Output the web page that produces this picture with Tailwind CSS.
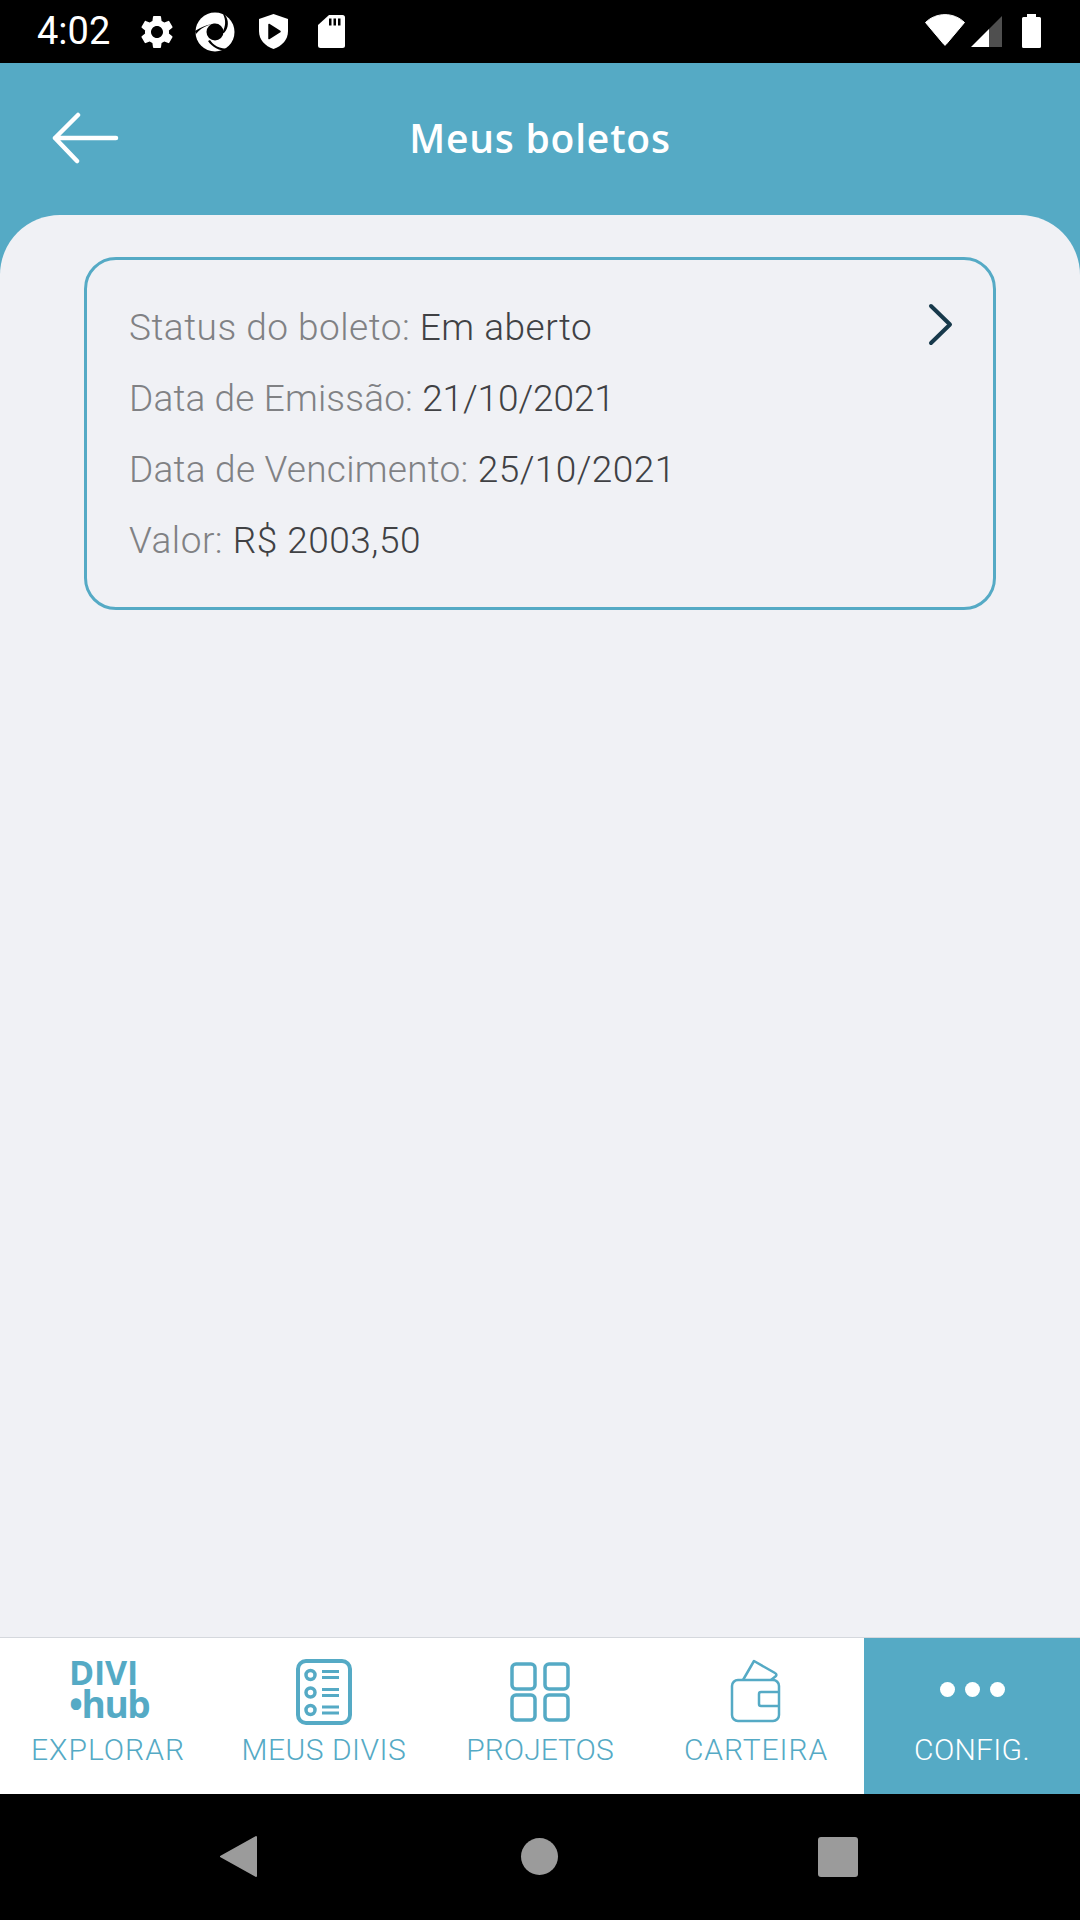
<!DOCTYPE html>
<html><head><meta charset="utf-8"><script src="https://cdn.jsdelivr.net/npm/@tailwindcss/browser@4"></script></head>
<body class="m-0">
<div class="w-[1080px] h-[1920px] flex flex-col bg-[#55aac5] overflow-hidden font-['Roboto',sans-serif]">
  <!-- status bar -->
  <div class="h-[63px] bg-black flex items-center text-white shrink-0 relative">
    <span class="absolute left-[37px] top-[9px] text-[38px] leading-[44px] font-normal font-['Roboto',sans-serif]">4:02</span>
    <svg class="absolute left-[137px] top-[12px]" width="40" height="40" viewBox="0 0 24 24" fill="#fff"><path d="M19.14 12.94c.04-.3.06-.61.06-.94 0-.32-.02-.64-.07-.94l2.03-1.58a.49.49 0 0 0 .12-.61l-1.92-3.32a.488.488 0 0 0-.59-.22l-2.39.96c-.5-.38-1.03-.7-1.62-.94l-.36-2.54a.484.484 0 0 0-.48-.41h-3.84c-.24 0-.43.17-.47.41l-.36 2.54c-.59.24-1.13.57-1.62.94l-2.39-.96c-.22-.08-.47 0-.59.22L2.74 8.87c-.12.21-.08.47.12.61l2.03 1.58c-.05.3-.09.63-.09.94s.02.64.07.94l-2.03 1.58a.49.49 0 0 0-.12.61l1.92 3.32c.12.22.37.29.59.22l2.39-.96c.5.38 1.03.7 1.62.94l.36 2.54c.05.24.24.41.48.41h3.84c.24 0 .44-.17.47-.41l.36-2.54c.59-.24 1.13-.56 1.62-.94l2.39.96c.22.08.47 0 .59-.22l1.92-3.32c.12-.22.07-.47-.12-.61l-2.01-1.58zM12 15.6c-1.98 0-3.6-1.62-3.6-3.6s1.62-3.6 3.6-3.6 3.6 1.62 3.6 3.6-1.62 3.6-3.6 3.6z"/></svg>
    <svg class="absolute left-[195px] top-[12px]" width="40" height="40" viewBox="0 0 40 40"><circle cx="20" cy="20" r="19.5" fill="#fff"/><circle cx="20" cy="20" r="8.5" fill="#000"/><path d="M0 19C8 14 15 12 21 11.5L14 13C8 15 4 18 1 22Z" fill="#000"/><path d="M28 2C31 8 31 14 27 21L29 21C34 16 34 8 30 3Z" fill="#000"/><path d="M15 28C18 33 24 37 35 37L33 39C24 39 17 35 13 29Z" fill="#000"/></svg>
    <svg class="absolute left-[259px] top-[14px]" width="29" height="35" viewBox="0 0 29 35"><path d="M14.500 0L29 5V17C29 26 23 32 14.500 35C6 32 0 26 0 17V5Z" fill="#fff"/><path d="M10 10.500L21 17.500L10 24.500Z" fill="#000" stroke="#000" stroke-width="1.500" stroke-linejoin="round"/></svg>
    <svg class="absolute left-[318px] top-[15px]" width="27" height="33" viewBox="0 0 27 33"><path d="M11 0H24.500A2.500 2.500 0 0 1 27 2.500V30.500A2.500 2.500 0 0 1 24.500 33H2.500A2.500 2.500 0 0 1 0 30.500V10Z" fill="#fff"/><path d="M11 3.500h2.500v7H11zM15.500 3.500h2.500v7h-2.500zM20 3.500h2.500v7H20z" fill="#000"/></svg>
    <svg class="absolute left-[925px] top-[14px]" width="40" height="32" viewBox="0 0 40 32"><path d="M0.500 8.500C11 -2 29 -2 39.500 8.500L21 30.500C20.500 31.300 19.500 31.300 19 30.500Z" fill="#fff" stroke="#fff" stroke-linejoin="round"/></svg>
    <svg class="absolute left-[971px] top-[16px]" width="32" height="31" viewBox="0 0 32 31"><path d="M0 31L18 13V31Z" fill="#fff"/><path d="M18 13L31 0V31H18Z" fill="#4f4f4f"/></svg>
    <svg class="absolute left-[1022px] top-[14px]" width="19" height="34" viewBox="0 0 19 34"><path d="M5 0H14V3H17.500A1.500 1.500 0 0 1 19 4.500V32.500A1.500 1.500 0 0 1 17.500 34H1.500A1.500 1.500 0 0 1 0 32.500V4.500A1.500 1.500 0 0 1 1.500 3H5Z" fill="#fff"/></svg>
  </div>
  <!-- header -->
  <div class="h-[152px] shrink-0 flex items-center justify-center relative">
    <svg class="absolute left-[52px] top-[48px]" width="68" height="54" viewBox="0 0 68 54" fill="none" stroke="#fff" stroke-width="4.500" stroke-linecap="round" stroke-linejoin="round"><path d="M64 27H3M26 4L3 27L25 50"/></svg>
    <h1 class="text-[39px] leading-[44px] font-semibold text-white -mt-[3px] font-['Open_Sans',sans-serif] tracking-[0.8px]">Meus boletos</h1>
  </div>
  <!-- content -->
  <main class="flex-1 bg-[#f0f1f5] rounded-t-[60px] pt-[42px] px-[84px]">
    <div class="relative h-[353px] border-[3px] border-[#55aac5] rounded-[32px] pl-[42px] pt-[32px] text-[37px] tracking-[0.42px] leading-[71px] text-[#808184] font-light font-['Roboto',sans-serif]">
      <p class="tracking-[0.5px]">Status do boleto: <span class="text-[#404144]">Em aberto</span></p>
      <p class="tracking-[0.15px]">Data de Emissão: <span class="text-[#404144] tracking-[-0.1px]">21/10/2021</span></p>
      <p class="tracking-[0.25px]">Data de Vencimento: <span class="text-[#404144] tracking-[0.42px]">25/10/2021</span></p>
      <p class="tracking-[0.5px]">Valor: <span class="text-[#404144]">R$ 2003,50</span></p>
      <svg class="absolute left-[841px] top-[43px]" width="26" height="44" viewBox="0 0 26 44" fill="none" stroke="#17394b" stroke-width="4" stroke-linecap="round" stroke-linejoin="round"><path d="M3 3L22 21.500L3 40"/></svg>
    </div>
  </main>
  <!-- tab bar -->
  <nav class="h-[157px] shrink-0 border-t border-[#d5d8dd] bg-white grid grid-cols-5 text-[#55aac5] text-[30px] font-light font-['Roboto',sans-serif]">
    <div class="flex flex-col items-center relative">
      <div class="absolute left-[69px] top-[19px] font-['Open_Sans',sans-serif] font-bold text-[34px] leading-[31px] tracking-[-0.2px]">DIVI<br><span class="text-[37px] leading-[31px] tracking-[-1.4px]">•hub</span></div>
      <span class="mt-[94px] leading-[36px] tracking-[1px]">EXPLORAR</span>
    </div>
    <div class="flex flex-col items-center">
      <svg class="mt-[20px]" width="58" height="68" viewBox="0 0 58 68" fill="none" stroke="#55aac5" stroke-width="3.500"><rect x="3" y="3" width="52" height="62" rx="8" stroke-width="4"/><circle cx="15.500" cy="17" r="4.500"/><circle cx="15.500" cy="34.500" r="4.500"/><circle cx="15.500" cy="52" r="4.500"/><path d="M27 13.500H44M27 19.500H44M27 31.500H44M27 37.500H44M27 49H44M27 55H44" stroke-width="3"/></svg>
      <span class="mt-[6px] leading-[36px] tracking-[0.5px]">MEUS DIVIS</span>
    </div>
    <div class="flex flex-col items-center">
      <svg class="mt-[24px]" width="60" height="60" viewBox="0 0 60 60" fill="none" stroke="#55aac5" stroke-width="3.500"><rect x="2" y="2" width="23" height="25" rx="4"/><rect x="35" y="2" width="23" height="25" rx="4"/><rect x="2" y="33" width="23" height="25" rx="4"/><rect x="35" y="33" width="23" height="25" rx="4"/></svg>
      <span class="mt-[10px] leading-[36px]">PROJETOS</span>
    </div>
    <div class="flex flex-col items-center">
      <svg class="mt-[21px]" width="52" height="64" viewBox="0 0 52 64" fill="none" stroke="#55aac5" stroke-width="2.500" stroke-linejoin="round"><path d="M13 21L24 2L45 14Q47 15 46 17L41 21"/><rect x="2" y="21" width="47" height="41" rx="6"/><path d="M49 33H31Q29 33 29 35V45Q29 47 31 47H49"/></svg>
      <span class="mt-[9px] leading-[36px] tracking-[0.9px]">CARTEIRA</span>
    </div>
    <div class="flex flex-col items-center bg-[#55aac5] text-white">
      <div class="mt-[44px] h-[15px] flex gap-[10px]"><i class="block w-[15px] h-[15px] rounded-full bg-white"></i><i class="block w-[15px] h-[15px] rounded-full bg-white"></i><i class="block w-[15px] h-[15px] rounded-full bg-white"></i></div>
      <span class="mt-[35px] leading-[36px] tracking-[0.3px]">CONFIG.</span>
    </div>
  </nav>
  <!-- android nav -->
  <div class="h-[126px] shrink-0 bg-black relative">
    <svg class="absolute left-[219px] top-[41px]" width="39" height="43" viewBox="0 0 39 43"><path d="M2 21.500L37 2V41Z" fill="#9b9b9b" stroke="#9b9b9b" stroke-width="2" stroke-linejoin="round"/></svg>
    <div class="absolute left-[521px] top-[44px] w-[37px] h-[37px] rounded-full bg-[#9b9b9b]"></div>
    <div class="absolute left-[818px] top-[43px] w-[40px] h-[40px] rounded-[3px] bg-[#9b9b9b]"></div>
  </div>
</div>
</body></html>
